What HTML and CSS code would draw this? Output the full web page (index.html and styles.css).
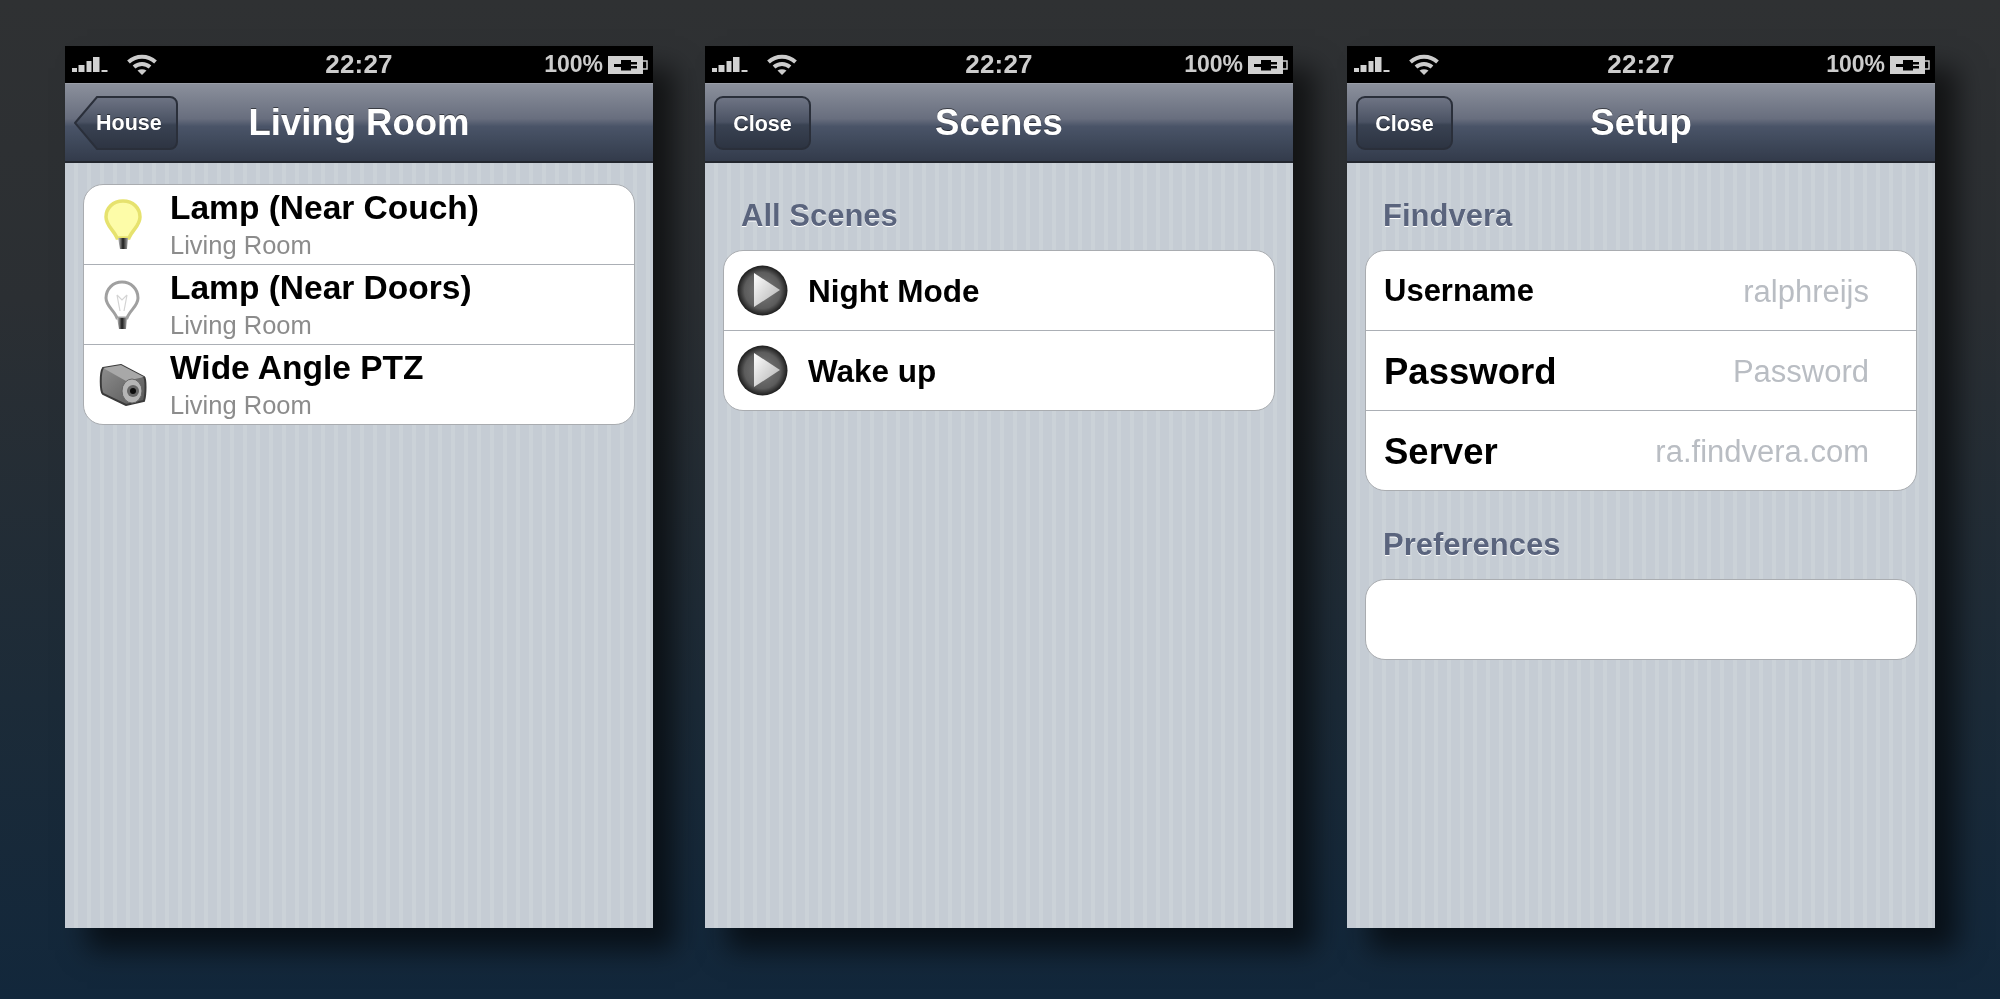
FILE: index.html
```html
<!DOCTYPE html>
<html lang="en">
<head>
    <meta charset="UTF-8">
    <title>Home control screens</title>
    <link rel="stylesheet" href="styles.css">
</head>
<body>
    <svg class="defs" width="0" height="0">
        <defs>
            <radialGradient id="playBall" cx="50%" cy="50%" r="50%">
                <stop offset="0%" stop-color="#7c7c7c"/>
                <stop offset="72%" stop-color="#5c5c5c"/>
                <stop offset="100%" stop-color="#1c1c1c"/>
            </radialGradient>
            <linearGradient id="playArrow" x1="0" y1="0" x2="1" y2="1">
                <stop offset="0%" stop-color="#fff"/>
                <stop offset="100%" stop-color="#b0b0b0"/>
            </linearGradient>
            <linearGradient id="backFill" x1="0" y1="0" x2="0" y2="1">
                <stop offset="0%" stop-color="#6e7484"/>
                <stop offset="48%" stop-color="#4a5263"/>
                <stop offset="54%" stop-color="#394252"/>
                <stop offset="100%" stop-color="#2d3442"/>
            </linearGradient>
            <linearGradient id="lampBase" x1="0" y1="0" x2="1" y2="0">
                <stop offset="0%" stop-color="#ccc"/>
                <stop offset="50%" stop-color="#1c1c1c"/>
                <stop offset="100%" stop-color="#aaa"/>
            </linearGradient>
            <linearGradient id="camBody" x1="0" y1="0" x2="1" y2="1">
                <stop offset="0%" stop-color="#8f8f8f"/>
                <stop offset="100%" stop-color="#565656"/>
            </linearGradient>

            <symbol id="signal" viewBox="0 0 36 16">
                <rect x="0" y="11" width="5" height="4" fill="#d2d2d2"/>
                <rect x="6.500" y="8" width="6" height="7" fill="#d2d2d2"/>
                <rect x="14.500" y="4" width="5" height="11" fill="#d2d2d2"/>
                <rect x="21" y="0" width="6.500" height="15" fill="#d2d2d2"/>
                <rect x="29.500" y="13" width="6" height="2" fill="#d2d2d2"/>
            </symbol>
            <symbol id="wifi" viewBox="0 0 30 21">
                <path d="M1.500 8A20 20 0 0 1 28.500 8" fill="none" stroke="#ccc" stroke-width="4"/>
                <path d="M7 13A12 12 0 0 1 23 13" fill="none" stroke="#ccc" stroke-width="4"/>
                <path d="M10.500 16.500Q15 14 19.500 16.500L15 21Z" fill="#ccc"/>
            </symbol>
            <symbol id="battery" viewBox="0 0 40 18">
                <rect x="0" y="0" width="35" height="18" fill="#d0d0d0"/>
                <path d="M35 5H39V13H35" fill="none" stroke="#ccc" stroke-width="1.500"/>
                <path d="M6 8H13V4H23V6H29V8.500H23V10H29V12.500H23V14.500H13V11H6Z" fill="#000"/>
            </symbol>
            <symbol id="bulbOn" viewBox="0 0 38 52">
                <path d="M19 2C9 2 2 9 2 18C2 27 10 31 13 39H25C28 31 36 27 36 18C36 9 29 2 19 2Z" fill="#fdfca8" stroke="#e6e26e" stroke-width="3.500"/>
                <path d="M14 39H24L23 50H16Z" fill="url(#lampBase)"/>
            </symbol>
            <symbol id="bulbOff" viewBox="0 0 38 52">
                <path d="M18 3C9 3 2 10 2 19C2 27 10 31 13 39H23C26 31 34 27 34 19C34 10 27 3 18 3Z" fill="#fff" stroke="#a0a0a0" stroke-width="3"/>
                <path d="M13 16L16 32M23 16L20 32M13 16L18 21L23 16" fill="none" stroke="#d4d4d4" stroke-width="1.200"/>
                <path d="M13 39H23L22 50H15Z" fill="url(#lampBase)"/>
            </symbol>
            <symbol id="camera" viewBox="0 0 48 42">
                <path d="M4 4L22 1L45 13C47 15 47 30 45 37L27 41L4 30C1 27 1 8 4 4Z" fill="url(#camBody)" stroke="#3a3a3a" stroke-width="2"/>
                <path d="M4 4L22 1L45 13L27 17Z" fill="#a8a8a8"/>
                <ellipse cx="33" cy="27" rx="10" ry="12" fill="#b5b5b5" stroke="#666"/>
                <circle cx="34" cy="27" r="6" fill="#666"/>
                <circle cx="34" cy="27" r="3" fill="#0c0c0c"/>
            </symbol>
            <symbol id="play" viewBox="0 0 51 51">
                <circle cx="25.500" cy="25.500" r="25" fill="url(#playBall)"/>
                <path d="M17 8L43 25L17 42Z" fill="url(#playArrow)"/>
            </symbol>
        </defs>
    </svg>

    <div class="phones">
        <!-- Living room -->
        <div class="phone">
            <div class="status-bar">
                <div class="status-left">
                    <svg class="ic-signal"><use href="#signal"/></svg>
                    <svg class="ic-wifi"><use href="#wifi"/></svg>
                </div>
                <div class="status-time">22:27</div>
                <div class="status-right">
                    <span>100%</span>
                    <svg class="ic-battery"><use href="#battery"/></svg>
                </div>
            </div>
            <div class="nav-bar">
                <div class="back-btn">
                    <svg class="back-shape" viewBox="0 0 104 54">
                        <path d="M1 27L23 1H96A7 7 0 0 1 103 8V46A7 7 0 0 1 96 53H23Z" fill="url(#backFill)" stroke="#2a2f3a" stroke-width="2"/>
                    </svg>
                    <span class="back-label">House</span>
                </div>
                <div class="nav-title">Living Room</div>
            </div>
            <div class="content">
                <div class="card card-top">
                    <div class="row row-device">
                        <div class="row-icon"><svg class="ic-bulb"><use href="#bulbOn"/></svg></div>
                        <div class="row-text">
                            <div class="row-title">Lamp (Near Couch)</div>
                            <div class="row-sub">Living Room</div>
                        </div>
                    </div>
                    <div class="row row-device">
                        <div class="row-icon"><svg class="ic-bulb"><use href="#bulbOff"/></svg></div>
                        <div class="row-text">
                            <div class="row-title">Lamp (Near Doors)</div>
                            <div class="row-sub">Living Room</div>
                        </div>
                    </div>
                    <div class="row row-device">
                        <div class="row-icon"><svg class="ic-camera"><use href="#camera"/></svg></div>
                        <div class="row-text">
                            <div class="row-title">Wide Angle PTZ</div>
                            <div class="row-sub">Living Room</div>
                        </div>
                    </div>
                </div>
            </div>
        </div>

        <!-- Scenes -->
        <div class="phone">
            <div class="status-bar">
                <div class="status-left">
                    <svg class="ic-signal"><use href="#signal"/></svg>
                    <svg class="ic-wifi"><use href="#wifi"/></svg>
                </div>
                <div class="status-time">22:27</div>
                <div class="status-right">
                    <span>100%</span>
                    <svg class="ic-battery"><use href="#battery"/></svg>
                </div>
            </div>
            <div class="nav-bar">
                <div class="close-btn">Close</div>
                <div class="nav-title">Scenes</div>
            </div>
            <div class="content">
                <div class="section-title">All Scenes</div>
                <div class="card">
                    <div class="row row-scene">
                        <div class="row-icon"><svg class="ic-play"><use href="#play"/></svg></div>
                        <div class="scene-name">Night Mode</div>
                    </div>
                    <div class="row row-scene">
                        <div class="row-icon"><svg class="ic-play"><use href="#play"/></svg></div>
                        <div class="scene-name">Wake up</div>
                    </div>
                </div>
            </div>
        </div>

        <!-- Setup -->
        <div class="phone phone-last">
            <div class="status-bar">
                <div class="status-left">
                    <svg class="ic-signal"><use href="#signal"/></svg>
                    <svg class="ic-wifi"><use href="#wifi"/></svg>
                </div>
                <div class="status-time">22:27</div>
                <div class="status-right">
                    <span>100%</span>
                    <svg class="ic-battery"><use href="#battery"/></svg>
                </div>
            </div>
            <div class="nav-bar">
                <div class="close-btn">Close</div>
                <div class="nav-title">Setup</div>
            </div>
            <div class="content">
                <div class="section-title">Findvera</div>
                <div class="card">
                    <div class="row row-field">
                        <div class="field-label small">Username</div>
                        <div class="field-value">ralphreijs</div>
                    </div>
                    <div class="row row-field">
                        <div class="field-label">Password</div>
                        <div class="field-value">Password</div>
                    </div>
                    <div class="row row-field">
                        <div class="field-label">Server</div>
                        <div class="field-value">ra.findvera.com</div>
                    </div>
                </div>
                <div class="section-title section-next">Preferences</div>
                <div class="card">
                    <div class="row"></div>
                </div>
            </div>
        </div>
    </div>
</body>
</html>
```

FILE: styles.css
```css
* {
    margin: 0;
    padding: 0;
    box-sizing: border-box;
}

body {
    width: 2000px;
    height: 999px;
    overflow: hidden;
    font-family: "Liberation Sans", Arial, sans-serif;
    background: linear-gradient(180deg, #2f3133 0%, #2b2f33 30%, #1c2b38 70%, #12273b 100%);
}

.defs {
    display: block;
    height: 0;
}

.phones {
    display: flex;
    gap: 52px;
    padding: 46px 0 0 65px;
}

.phone {
    width: 588px;
    height: 882px;
    display: flex;
    flex-direction: column;
    box-shadow: 22px 22px 26px rgba(0, 0, 0, 0.6);
    filter: blur(0.5px);
}

.phone-last {
    margin-left: 2px;
}

/* status bar */
.status-bar {
    height: 37px;
    background: #000;
    color: #ccc;
    display: grid;
    grid-template-columns: 1fr auto 1fr;
    align-items: center;
}

.status-left {
    display: flex;
    align-items: center;
    padding-left: 7px;
}

.ic-signal {
    width: 36px;
    height: 16px;
}

.ic-wifi {
    width: 30px;
    height: 21px;
    margin-left: 19px;
}

.status-time {
    font-size: 26px;
    font-weight: bold;
    letter-spacing: 0.2px;
}

.status-right {
    display: flex;
    justify-content: flex-end;
    align-items: center;
    padding-right: 5px;
    font-size: 23px;
    font-weight: bold;
}

.ic-battery {
    width: 40px;
    height: 18px;
    margin-left: 5px;
}

/* nav bar */
.nav-bar {
    height: 80px;
    display: grid;
    grid-template-columns: 1fr auto 1fr;
    align-items: center;
    padding-left: 9px;
    padding-right: 9px;
    border-top: 1px solid #9a9ea7;
    border-bottom: 2px solid #23272f;
    background: linear-gradient(180deg, #8b909c 0%, #686e7e 45%, #4a5468 55%, #3f495b 75%, #333b4b 100%);
}

.back-btn {
    display: grid;
    width: 104px;
    height: 54px;
}

.back-shape,
.back-label {
    grid-area: 1 / 1;
}

.back-shape {
    width: 104px;
    height: 54px;
}

.back-label {
    align-self: center;
    padding: 2px 0 0 22px;
    color: #fff;
    font-size: 21.500px;
    font-weight: bold;
    text-shadow: 0 -1px 0 rgba(0, 0, 0, 0.5);
}

.close-btn {
    width: 97px;
    height: 54px;
    line-height: 52px;
    text-align: center;
    color: #fff;
    font-size: 21.500px;
    font-weight: bold;
    text-shadow: 0 -1px 0 rgba(0, 0, 0, 0.5);
    border: 2px solid #2a2f3a;
    border-radius: 9px;
    background: linear-gradient(180deg, #6e7484 0%, #4a5263 48%, #394252 54%, #2d3442 100%);
}

.nav-title {
    grid-column: 2;
    color: #fff;
    font-size: 36.500px;
    font-weight: bold;
    text-shadow: 0 -1px 0 rgba(0, 0, 0, 0.5);
}

/* content */
.content {
    flex: 1;
    padding: 0 18px;
    background: repeating-linear-gradient(90deg, #c5ccd4 0, #c5ccd4 9px, #cbd2d8 9px, #cbd2d8 13px);
}

.section-title {
    padding: 35px 0 0 18px;
    margin-bottom: 16px;
    font-size: 31px;
    line-height: 36px;
    font-weight: bold;
    color: #5a647d;
    text-shadow: 0 1px 0 #fff;
}

.section-next {
    padding-top: 36px;
}

.card {
    background: #fff;
    border: 1px solid #a9acb0;
    border-radius: 20px;
    overflow: hidden;
}

.card-top {
    margin-top: 21px;
}

.row {
    height: 80px;
    border-bottom: 1px solid #abafb5;
    display: flex;
}

.row:last-child {
    height: 79px;
    border-bottom: none;
}

.row-icon {
    width: 52px;
    margin-left: 13px;
    margin-right: 21px;
    display: flex;
    align-items: center;
    justify-content: center;
}

.row-scene .row-icon {
    margin-left: 12px;
    margin-right: 20px;
}

.ic-bulb {
    width: 38px;
    height: 52px;
    filter: blur(0.6px);
}

.ic-camera {
    width: 48px;
    height: 42px;
    filter: blur(0.5px);
}

.ic-play {
    width: 51px;
    height: 51px;
    filter: blur(0.4px);
}

.row-device .row-text {
    padding-top: 3px;
}

.row-title {
    font-size: 33.500px;
    line-height: 40px;
    font-weight: bold;
    color: #000;
}

.row-sub {
    margin-top: 2px;
    font-size: 25.500px;
    line-height: 30px;
    color: #8c8c8c;
}

.row-scene {
    align-items: center;
}

.scene-name {
    margin-top: 2px;
    font-size: 31.500px;
    font-weight: bold;
    color: #000;
}

.row-field {
    align-items: center;
    justify-content: space-between;
    padding: 0 47px 0 18px;
}

.field-label {
    margin-top: 3px;
    font-size: 36.500px;
    font-weight: bold;
    color: #000;
}

.field-label.small {
    margin-top: 0;
    font-size: 31px;
}

.field-value {
    margin-top: 2px;
    font-size: 31px;
    color: #b9bdc3;
}
```
